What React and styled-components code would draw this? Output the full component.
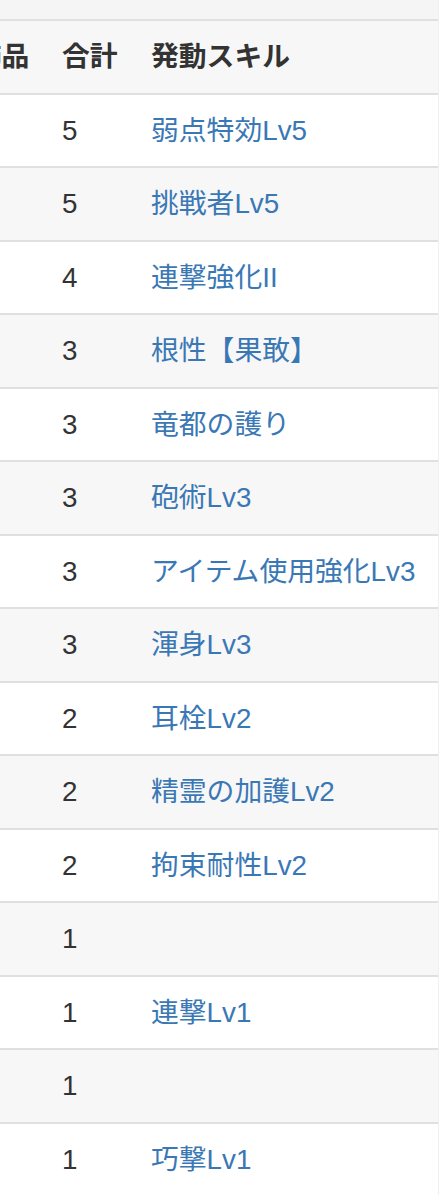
import React from 'react';
import styled, { createGlobalStyle } from 'styled-components';

const GlobalStyle = createGlobalStyle`
  html, body {
    margin: 0;
    padding: 0;
    background: #fff;
  }
  body {
    font-family: "Liberation Sans", "Noto Sans CJK JP", sans-serif;
    color: #333;
  }
`;

const Wrapper = styled.div`
  width: 438px;
  overflow: hidden;
  border-right: 1px solid #f0f0f0;
`;

const TopStrip = styled.div`
  height: 19px;
  background: #f5f5f5;
`;

const Table = styled.table`
  border-collapse: collapse;
  border-spacing: 0;
  table-layout: fixed;
  width: 508px;
  margin-left: -70px;
  font-size: 27.8px;
  line-height: 39.5px;
`;

const Row = styled.tr`
  background: ${(p) => (p.$striped ? '#f7f7f7' : '#fff')};
`;

const Th = styled.th`
  text-align: left;
  font-weight: bold;
  padding: 16px;
  border-top: 2px solid #e0e0e0;
  white-space: nowrap;
  overflow: hidden;
`;

const Td = styled.td`
  padding: 16px;
  border-top: 2px solid #e0e0e0;
  white-space: nowrap;
  vertical-align: top;
`;

const SkillLink = styled.a`
  color: #3a78b5;
  text-decoration: none;
`;

const skills = [
  { total: 5, name: '弱点特効Lv5' },
  { total: 5, name: '挑戦者Lv5' },
  { total: 4, name: '連撃強化II' },
  { total: 3, name: '根性【果敢】' },
  { total: 3, name: '竜都の護り' },
  { total: 3, name: '砲術Lv3' },
  { total: 3, name: 'アイテム使用強化Lv3' },
  { total: 3, name: '渾身Lv3' },
  { total: 2, name: '耳栓Lv2' },
  { total: 2, name: '精霊の加護Lv2' },
  { total: 2, name: '拘束耐性Lv2' },
  { total: 1, name: '' },
  { total: 1, name: '連撃Lv1' },
  { total: 1, name: '' },
  { total: 1, name: '巧撃Lv1' },
];

export default function App() {
  return (
    <>
      <GlobalStyle />
      <Wrapper>
        <TopStrip />
        <Table>
          <colgroup>
            <col style={{ width: 116 }} />
            <col style={{ width: 89 }} />
            <col />
          </colgroup>
          <thead>
            <Row $striped>
              <Th>装飾品</Th>
              <Th>合計</Th>
              <Th>発動スキル</Th>
            </Row>
          </thead>
          <tbody>
            {skills.map((s, i) => (
              <Row key={i} $striped={i % 2 === 1}>
                <Td />
                <Td>{s.total}</Td>
                <Td>{s.name && <SkillLink href="#">{s.name}</SkillLink>}</Td>
              </Row>
            ))}
          </tbody>
        </Table>
      </Wrapper>
    </>
  );
}
